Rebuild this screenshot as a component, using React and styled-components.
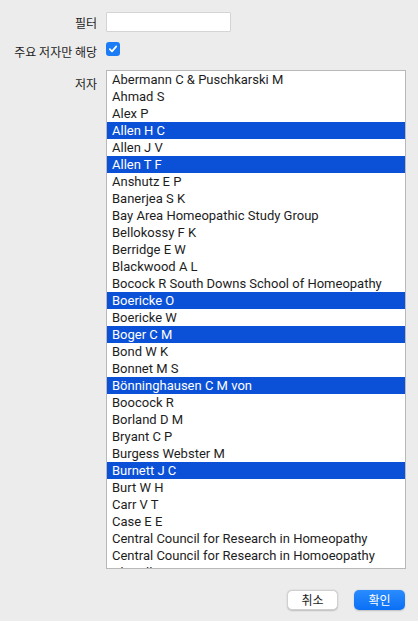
import React, { useState } from "react";
import styled, { createGlobalStyle } from "styled-components";

const GlobalStyle = createGlobalStyle`
  html, body {
    margin: 0;
    padding: 0;
    background: #ececec;
  }
  body {
    font-family: "Roboto", "Noto Sans CJK KR", sans-serif;
    font-size: 13px;
    color: #1d1d1d;
  }
`;

const AUTHORS = [
  { name: "Abermann C & Puschkarski M" },
  { name: "Ahmad S" },
  { name: "Alex P" },
  { name: "Allen H C", selected: true },
  { name: "Allen J V" },
  { name: "Allen T F", selected: true },
  { name: "Anshutz E P" },
  { name: "Banerjea S K" },
  { name: "Bay Area Homeopathic Study Group" },
  { name: "Bellokossy F K" },
  { name: "Berridge E W" },
  { name: "Blackwood A L" },
  { name: "Bocock R South Downs School of Homeopathy" },
  { name: "Boericke O", selected: true },
  { name: "Boericke W" },
  { name: "Boger C M", selected: true },
  { name: "Bond W K" },
  { name: "Bonnet M S" },
  { name: "Bönninghausen C M von", selected: true },
  { name: "Boocock R" },
  { name: "Borland D M" },
  { name: "Bryant C P" },
  { name: "Burgess Webster M" },
  { name: "Burnett J C", selected: true },
  { name: "Burt W H" },
  { name: "Carr V T" },
  { name: "Case E E" },
  { name: "Central Council for Research in Homeopathy" },
  { name: "Central Council for Research in Homoeopathy" },
  { name: "Chandler W M" },
];

const Dialog = styled.div`
  width: 418px;
  height: 621px;
  box-sizing: border-box;
  padding: 12px 12px 0 0;
  display: flex;
  flex-direction: column;
`;

const Form = styled.div`
  display: grid;
  grid-template-columns: 97px 1fr;
  column-gap: 9px;
  align-items: center;
`;

const Label = styled.label`
  text-align: right;
  font-family: "Noto Sans CJK KR", sans-serif;
  font-size: 12px;
  white-space: nowrap;
  align-self: ${(p) => (p.top ? "start" : "center")};
  padding-top: ${(p) => (p.top ? "5px" : "0")};
`;

const TextInput = styled.input`
  width: 125px;
  height: 20px;
  box-sizing: border-box;
  border: 1px solid #d4d4d4;
  border-radius: 1px;
  background: #fff;
  outline: none;
  font: inherit;
  padding: 0 4px;
`;

const CheckRow = styled.div`
  height: 14px;
  margin: 10px 0 14px;
  display: flex;
  align-items: center;
`;

const CheckBox = styled.span`
  width: 14px;
  height: 14px;
  border-radius: 3px;
  background: #1b7cf6;
  display: inline-flex;
  align-items: center;
  justify-content: center;
`;

const ListBox = styled.div`
  width: 300px;
  height: 499px;
  box-sizing: border-box;
  border: 1px solid #b9b9b9;
  background: #fff;
  overflow: hidden;
`;

const Row = styled.div`
  height: 17px;
  line-height: 17px;
  padding-left: 5px;
  white-space: nowrap;
  font-size: 13px;
  background: ${(p) => (p.selected ? "#0b51d7" : "#fff")};
  color: ${(p) => (p.selected ? "#fff" : "#1d1d1d")};
`;

const Footer = styled.div`
  display: flex;
  justify-content: flex-end;
  gap: 16px;
  margin-top: 21px;
  padding-right: 1px;
`;

const Button = styled.button`
  width: 51px;
  height: 20px;
  border-radius: 5px;
  font-family: "Noto Sans CJK KR", sans-serif;
  font-size: 12px;
  line-height: 18px;
  padding: 0;
  cursor: pointer;
  border: ${(p) => (p.primary ? "none" : "0.5px solid #d0d0d0")};
  background: ${(p) =>
    p.primary ? "linear-gradient(#2a8cff, #0a6ff5)" : "#fff"};
  color: ${(p) => (p.primary ? "#fff" : "#1d1d1d")};
  box-shadow: 0 0.5px 1.5px rgba(0, 0, 0, 0.2);
`;

export default function App() {
  const [filter, setFilter] = useState("");
  const items = AUTHORS.filter((a) =>
    a.name.toLowerCase().includes(filter.toLowerCase())
  );
  return (
    <>
      <GlobalStyle />
      <Dialog>
        <Form>
          <Label>필터</Label>
          <TextInput value={filter} onChange={(e) => setFilter(e.target.value)} />
          <Label>주요 저자만 해당</Label>
          <CheckRow>
            <CheckBox>
              <svg width="10" height="10" viewBox="0 0 10 10">
                <path
                  d="M1.8 5.2 L4 7.4 L8.3 2.4"
                  fill="none"
                  stroke="#fff"
                  strokeWidth="1.7"
                  strokeLinecap="round"
                  strokeLinejoin="round"
                />
              </svg>
            </CheckBox>
          </CheckRow>
          <Label top>저자</Label>
          <ListBox>
            {items.map((a, i) => (
              <Row key={i} selected={a.selected}>
                {a.name}
              </Row>
            ))}
          </ListBox>
        </Form>
        <Footer>
          <Button>취소</Button>
          <Button primary>확인</Button>
        </Footer>
      </Dialog>
    </>
  );
}
